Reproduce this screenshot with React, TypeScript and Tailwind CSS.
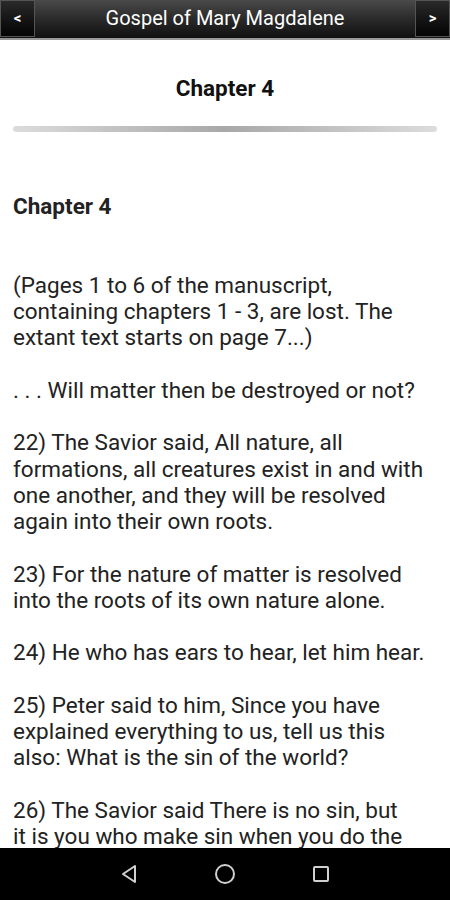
import type { ReactNode } from "react";

const paras: ReactNode[] = [
  "(Pages 1 to 6 of the manuscript, containing chapters 1 - 3, are lost. The extant text starts on page 7...)",
  ". . . Will matter then be destroyed or not?",
  "22) The Savior said, All nature, all formations, all creatures exist in and with one another, and they will be resolved again into their own roots.",
  "23) For the nature of matter is resolved into the roots of its own nature alone.",
  "24) He who has ears to hear, let him hear.",
  "25) Peter said to him, Since you have explained everything to us, tell us this also: What is the sin of the world?",
  <>
    26) The Savior said There is no sin, but
    <br />
    it is you who make sin when you do the things that are like the nature of
    adultery, which is called sin.
  </>,
];

function NavButton({ dir }: { dir: "left" | "right" }) {
  return (
    <div className="w-[35px] h-[37px] bg-gradient-to-b from-[#2a2a2a] to-[#050505] border border-[#555] flex items-center justify-center">
      <span className="text-white text-[15px] font-bold leading-none">
        {dir === "left" ? "<" : ">"}
      </span>
    </div>
  );
}

export default function App() {
  return (
    <div
      className="w-[450px] h-[900px] bg-white flex flex-col overflow-hidden"
      style={{ fontFamily: "Roboto, 'Liberation Sans', sans-serif" }}
    >
      <div className="h-[40px] shrink-0 flex items-start bg-gradient-to-b from-[#4a4a4a] via-[#2a2a2a] to-[#111] border-b-2 border-[#9a9a9a]">
        <NavButton dir="left" />
        <div className="flex-1 text-center text-white text-[20px] leading-[36px]">
          Gospel of Mary Magdalene
        </div>
        <NavButton dir="right" />
      </div>

      <div className="flex-1 overflow-hidden">
        <h1 className="text-center text-[22.5px] font-bold text-[#111] mt-[35px] leading-[26px]">
          Chapter 4
        </h1>
        <div className="mx-[13px] mt-[25px] h-[6px] rounded-full bg-gradient-to-r from-[#dcdcdc] via-[#a8a8a8] to-[#dcdcdc]" />
        <div className="px-[13px] mt-[61px] text-[22.5px] leading-[26.25px] text-[#222]">
          <div className="font-bold mb-[52.5px]">Chapter 4</div>
          {paras.map((p, i) => (
            <p key={i} className="mb-[26.25px]">
              {p}
            </p>
          ))}
        </div>
      </div>

      <div className="h-[52px] shrink-0 bg-black flex items-center justify-center gap-[72px]">
        <svg width="24" height="24" viewBox="0 0 24 24" fill="none" stroke="#d0d0d0" strokeWidth="2" strokeLinejoin="round">
          <path d="M18 4 L6 12 L18 20 Z" />
        </svg>
        <svg width="24" height="24" viewBox="0 0 24 24" fill="none" stroke="#d0d0d0" strokeWidth="2">
          <circle cx="12" cy="12" r="9" />
        </svg>
        <svg width="24" height="24" viewBox="0 0 24 24" fill="none" stroke="#d0d0d0" strokeWidth="2">
          <rect x="5" y="5" width="14" height="14" rx="1" />
        </svg>
      </div>
    </div>
  );
}
